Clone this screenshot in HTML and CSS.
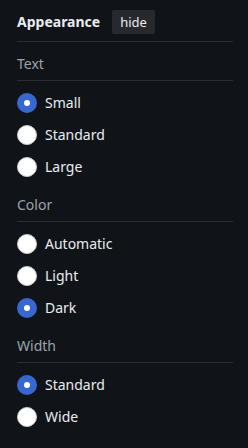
FILE: index.html
```html
<!DOCTYPE html>
<html>
<head>
<meta charset="utf-8">
<link rel="stylesheet" href="styles.css">
</head>
<body>
<div class="menu">
  <div class="title-row">
    <span class="title">Appearance</span>
    <button class="hide-btn">hide</button>
  </div>
  <div class="heading">Text</div>
  <ul class="list">
    <li class="row"><span class="radio checked"></span><span class="label">Small</span></li>
    <li class="row"><span class="radio"></span><span class="label">Standard</span></li>
    <li class="row"><span class="radio"></span><span class="label">Large</span></li>
  </ul>
  <div class="heading">Color</div>
  <ul class="list">
    <li class="row"><span class="radio"></span><span class="label">Automatic</span></li>
    <li class="row"><span class="radio"></span><span class="label">Light</span></li>
    <li class="row"><span class="radio checked"></span><span class="label">Dark</span></li>
  </ul>
  <div class="heading">Width</div>
  <ul class="list">
    <li class="row"><span class="radio checked"></span><span class="label">Standard</span></li>
    <li class="row"><span class="radio"></span><span class="label">Wide</span></li>
  </ul>
</div>
</body>
</html>
```
FILE: styles.css
```css
html, body {
  margin: 0;
  padding: 0;
  background: #101418;
  height: 100%;
}
body {
  font-family: "Noto Sans", "Open Sans", sans-serif;
  color: #eaecf0;
  font-size: 14px;
}
.menu {
  width: 216px;
  padding-left: 17px;
}
.title-row {
  display: flex;
  align-items: center;
  gap: 12px;
  padding: 9px 0 7px;
  border-bottom: 1px solid #2a2d32;
}
.title {
  font-weight: 700;
  font-size: 14px;
  line-height: 24px;
  padding-top: 1px;
}
.hide-btn {
  font-family: inherit;
  font-size: 13px;
  color: #eaecf0;
  background: #27292d;
  border: none;
  border-radius: 2px;
  height: 24px;
  padding: 0 8px;
  line-height: 24px;
}
.heading {
  color: #9ea3aa;
  line-height: 20px;
  padding: 12px 0 6px;
  border-bottom: 1px solid #2a2d32;
}
.list {
  list-style: none;
  margin: 0;
  padding: 6px 0 0;
}
.row {
  display: flex;
  align-items: center;
  gap: 8px;
  height: 32px;
}
.radio {
  box-sizing: border-box;
  width: 20px;
  height: 20px;
  border-radius: 50%;
  background: #fff;
  border: 1px solid #c8ccd1;
}
.radio.checked {
  background: #fff;
  border: 7px solid #3767cf;
}
.label {
  line-height: 20px;
}
```
